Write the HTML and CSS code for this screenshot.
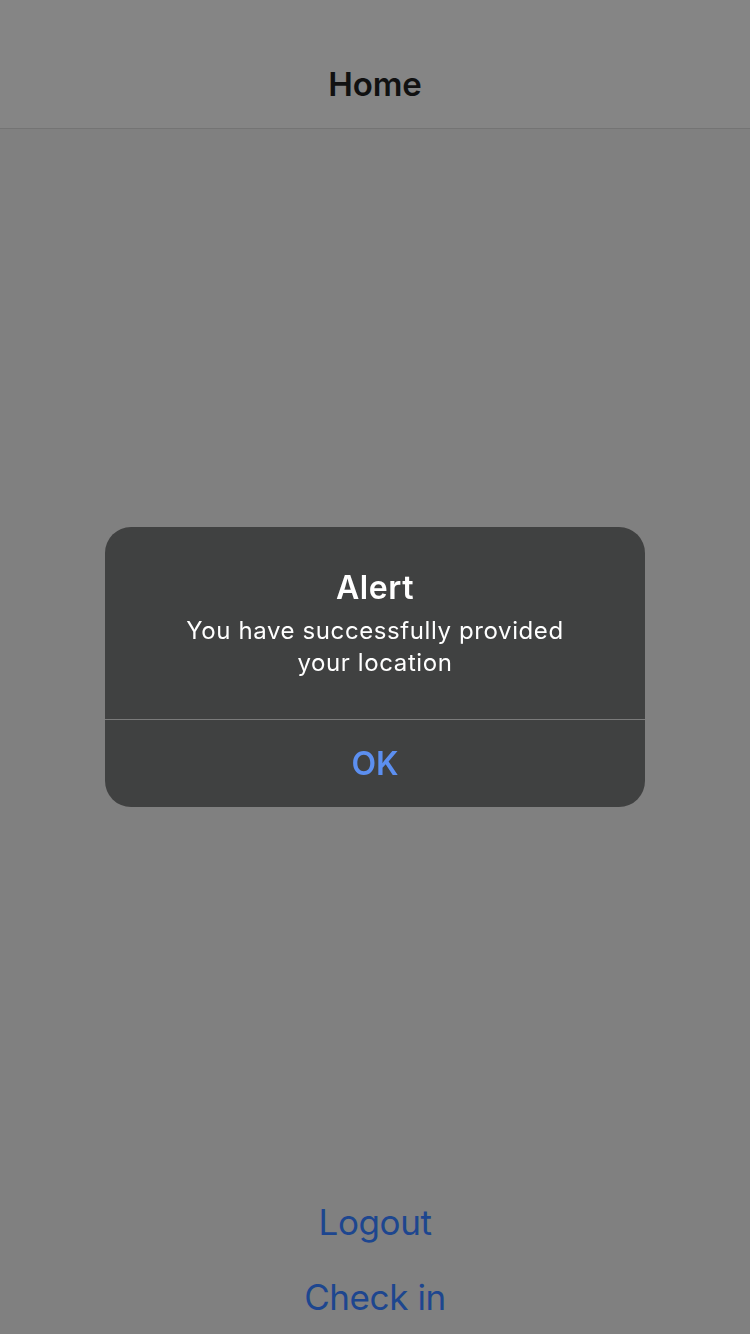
FILE: index.html
```html
<!DOCTYPE html>
<html>
<head>
<meta charset="utf-8">
<link rel="stylesheet" href="styles.css">
</head>
<body>
<div class="screen">
  <header class="navbar"><h1 class="nav-title">Home</h1></header>
  <main class="content"></main>
  <footer class="actions">
    <a class="action">Logout</a>
    <a class="action">Check in</a>
  </footer>
</div>
<div class="overlay">
  <div class="alert">
    <div class="alert-body">
      <div class="alert-title">Alert</div>
      <div class="alert-message">You have successfully provided<br>your location</div>
    </div>
    <div class="alert-button">OK</div>
  </div>
</div>
</body>
</html>
```
FILE: styles.css
```css
html, body { margin: 0; padding: 0; }
body {
  width: 750px;
  height: 1334px;
  overflow: hidden;
  background: #808080;
  font-family: Inter, "Noto Sans", sans-serif;
}
.screen {
  display: flex;
  flex-direction: column;
  height: 1334px;
}
.navbar {
  height: 88px;
  padding-top: 40px;
  background: #858585;
  border-bottom: 1px solid #747474;
  display: flex;
  align-items: center;
  justify-content: center;
  box-sizing: content-box;
}
.nav-title {
  margin: 0;
  font-size: 33px;
  font-weight: 600;
  color: #111111;
  letter-spacing: -0.1px;
}
.content { flex: 1; }
.actions {
  display: flex;
  flex-direction: column;
  align-items: center;
  gap: 31px;
  padding-bottom: 15px;
}
.action {
  font-size: 35px;
  line-height: 44px;
  color: #1d468f;
  letter-spacing: -0.4px;
}
.overlay {
  position: fixed;
  inset: 0;
  display: flex;
  align-items: center;
  justify-content: center;
}
.alert {
  width: 540px;
  height: 280px;
  background: #404141;
  border-radius: 26px;
  display: flex;
  flex-direction: column;
  overflow: hidden;
}
.alert-body {
  height: 193px;
  box-sizing: border-box;
  padding-top: 41px;
  text-align: center;
  border-bottom: 1px solid #7a7a7a;
  color: #ffffff;
}
.alert-title {
  font-size: 32px;
  font-weight: 600;
  line-height: 40px;
  letter-spacing: 0.6px;
}
.alert-message {
  font-size: 24px;
  line-height: 32px;
  margin-top: 7px;
  letter-spacing: 0.6px;
}
.alert-button {
  flex: 1;
  display: flex;
  align-items: center;
  justify-content: center;
  font-size: 32px;
  font-weight: 600;
  color: #5c8ff0;
}
```
